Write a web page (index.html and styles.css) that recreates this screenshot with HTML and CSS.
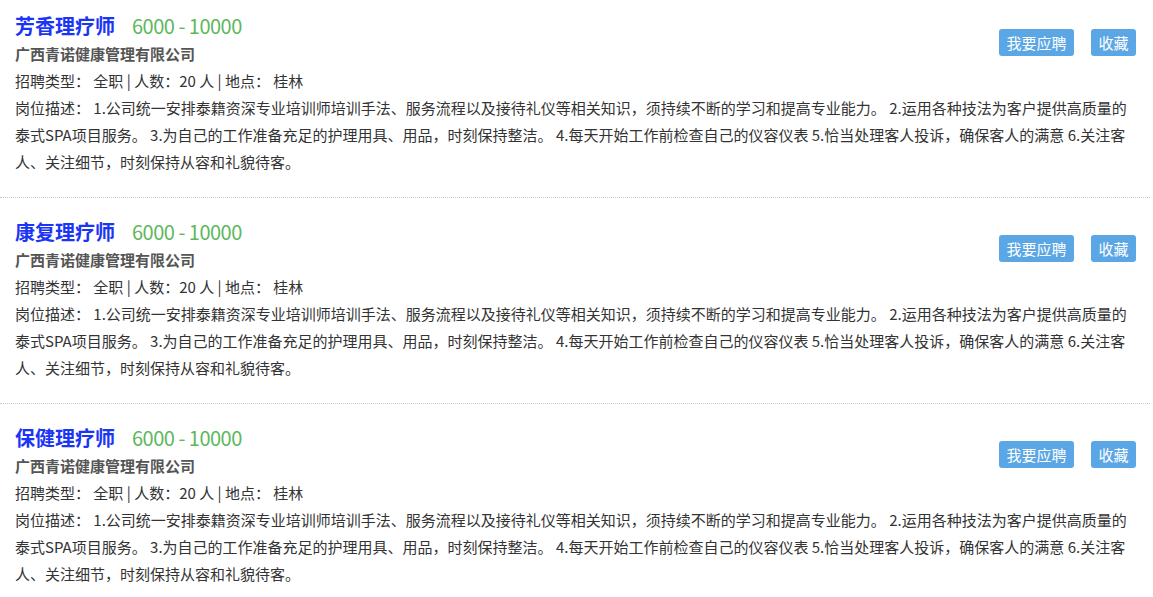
FILE: index.html
```html
<!DOCTYPE html>
<html lang="zh-CN">
<head>
<meta charset="utf-8">
<title>招聘信息</title>
<link rel="stylesheet" href="styles.css">
</head>
<body>
<div class="job-list">
  <div class="job">
    <div class="job-head">
      <div class="job-main">
        <div class="job-title"><span class="job-name">芳香理疗师</span><span class="salary">6000 - 10000</span></div>
        <div class="company">广西青诺健康管理有限公司</div>
      </div>
      <div class="actions"><span class="btn">我要应聘</span><span class="btn">收藏</span></div>
    </div>
    <div class="info">招聘类型： 全职 | 人数：20 人 | 地点： 桂林</div>
    <div class="desc">岗位描述： 1.公司统一安排泰籍资深专业培训师培训手法、服务流程以及接待礼仪等相关知识，须持续不断的学习和提高专业能力。 2.运用各种技法为客户提供高质量的泰式SPA项目服务。 3.为自己的工作准备充足的护理用具、用品，时刻保持整洁。 4.每天开始工作前检查自己的仪容仪表 5.恰当处理客人投诉，确保客人的满意 6.关注客人、关注细节，时刻保持从容和礼貌待客。</div>
  </div>
  <div class="job">
    <div class="job-head">
      <div class="job-main">
        <div class="job-title"><span class="job-name">康复理疗师</span><span class="salary">6000 - 10000</span></div>
        <div class="company">广西青诺健康管理有限公司</div>
      </div>
      <div class="actions"><span class="btn">我要应聘</span><span class="btn">收藏</span></div>
    </div>
    <div class="info">招聘类型： 全职 | 人数：20 人 | 地点： 桂林</div>
    <div class="desc">岗位描述： 1.公司统一安排泰籍资深专业培训师培训手法、服务流程以及接待礼仪等相关知识，须持续不断的学习和提高专业能力。 2.运用各种技法为客户提供高质量的泰式SPA项目服务。 3.为自己的工作准备充足的护理用具、用品，时刻保持整洁。 4.每天开始工作前检查自己的仪容仪表 5.恰当处理客人投诉，确保客人的满意 6.关注客人、关注细节，时刻保持从容和礼貌待客。</div>
  </div>
  <div class="job">
    <div class="job-head">
      <div class="job-main">
        <div class="job-title"><span class="job-name">保健理疗师</span><span class="salary">6000 - 10000</span></div>
        <div class="company">广西青诺健康管理有限公司</div>
      </div>
      <div class="actions"><span class="btn">我要应聘</span><span class="btn">收藏</span></div>
    </div>
    <div class="info">招聘类型： 全职 | 人数：20 人 | 地点： 桂林</div>
    <div class="desc">岗位描述： 1.公司统一安排泰籍资深专业培训师培训手法、服务流程以及接待礼仪等相关知识，须持续不断的学习和提高专业能力。 2.运用各种技法为客户提供高质量的泰式SPA项目服务。 3.为自己的工作准备充足的护理用具、用品，时刻保持整洁。 4.每天开始工作前检查自己的仪容仪表 5.恰当处理客人投诉，确保客人的满意 6.关注客人、关注细节，时刻保持从容和礼貌待客。</div>
  </div>
</div>
</body>
</html>
```

FILE: styles.css
```css
html, body {
  margin: 0;
  padding: 0;
  background: #fff;
}
body {
  font-family: "Noto Sans CJK SC", "Noto Sans", sans-serif;
  color: #333;
  font-size: 15px;
}
.job-list {
  width: 1150px;
}
.job {
  padding: 20px 15px 22px;
  border-bottom: 1px dotted #c8c8c8;
}
.job:first-child {
  padding-top: 12px;
}
.job:last-child {
  border-bottom: none;
}
.job-head {
  display: flex;
  justify-content: space-between;
  align-items: flex-start;
}
.job-title {
  height: 28px;
  line-height: 28px;
  white-space: nowrap;
}
.job-name {
  font-size: 20px;
  font-weight: bold;
  color: #1a35f5;
}
.salary {
  font-size: 20px;
  color: #5cb85c;
  margin-left: 17px;
  letter-spacing: -0.5px;
}
.company {
  line-height: 27px;
  font-weight: bold;
  color: #555;
}
.actions {
  display: flex;
  gap: 17px;
  margin-top: 17px;
  margin-right: -1px;
}
.btn {
  display: inline-block;
  height: 27px;
  line-height: 27px;
  padding: 0 7.5px;
  background: #5ba6e4;
  color: #fff;
  font-size: 15px;
  border-radius: 3px;
  white-space: nowrap;
}
.info {
  line-height: 27px;
}
.desc {
  line-height: 27px;
}
```
